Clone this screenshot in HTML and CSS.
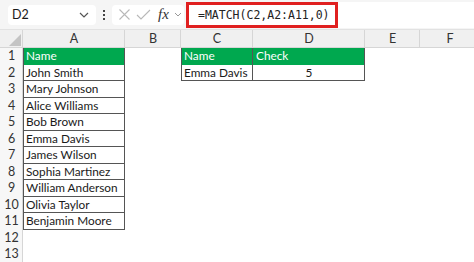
FILE: index.html
```html
<!DOCTYPE html>
<html>
<head>
    <title>MATCH example</title>
    <link rel="stylesheet" href="styles.css">
</head>
<body>
    <!-- Formula bar -->
    <div class="formula-bar">
        <div class="name-box">
            <span>D2</span>
            <svg width="10" height="6" viewBox="0 0 10 6"><path d="M1 1 L5 5 L9 1" fill="none" stroke="#555" stroke-width="1.2"/></svg>
        </div>
        <div class="dots"><i></i><i></i><i></i></div>
        <div class="fx-box">
            <svg width="13" height="13" viewBox="0 0 13 13"><path d="M1.5 1.5 L11.5 11.5 M11.5 1.5 L1.5 11.5" stroke="#b8b8b8" stroke-width="1.1"/></svg>
            <svg width="15" height="13" viewBox="0 0 15 13"><path d="M1 7 L5 11 L14 2" fill="none" stroke="#b8b8b8" stroke-width="1.1"/></svg>
            <span class="fx">fx</span>
            <svg width="8" height="5" viewBox="0 0 8 5"><path d="M1 1 L4 4 L7 1" fill="none" stroke="#999" stroke-width="1"/></svg>
        </div>
        <div class="formula-input">
            <span class="formula">=MATCH(C2,A2:A11,0)</span>
        </div>
    </div>

    <!-- Sheet -->
    <div class="sheet">
        <div class="corner"><svg width="12" height="12" viewBox="0 0 12 12"><path d="M12 0 L12 12 L0 12 Z" fill="#c4c4c4"/></svg></div>
        <div class="col-head">A</div>
        <div class="col-head">B</div>
        <div class="col-head">C</div>
        <div class="col-head">D</div>
        <div class="col-head">E</div>
        <div class="col-head">F</div>

        <div class="row-head">1</div>
        <div class="cell head first">Name</div>
        <div class="cell"></div>
        <div class="cell head first">Name</div>
        <div class="cell head">Check</div>
        <div class="cell"></div>
        <div class="cell"></div>

        <div class="row-head">2</div>
        <div class="cell box first">John Smith</div>
        <div class="cell"></div>
        <div class="cell box first">Emma Davis</div>
        <div class="cell box center">5</div>
        <div class="cell"></div>
        <div class="cell"></div>

        <div class="row-head">3</div>
        <div class="cell box first">Mary Johnson</div>
        <div class="cell wide"></div>

        <div class="row-head">4</div>
        <div class="cell box first">Alice Williams</div>
        <div class="cell wide"></div>

        <div class="row-head">5</div>
        <div class="cell box first">Bob Brown</div>
        <div class="cell wide"></div>

        <div class="row-head">6</div>
        <div class="cell box first">Emma Davis</div>
        <div class="cell wide"></div>

        <div class="row-head">7</div>
        <div class="cell box first">James Wilson</div>
        <div class="cell wide"></div>

        <div class="row-head">8</div>
        <div class="cell box first">Sophia Martinez</div>
        <div class="cell wide"></div>

        <div class="row-head">9</div>
        <div class="cell box first">William Anderson</div>
        <div class="cell wide"></div>

        <div class="row-head">10</div>
        <div class="cell box first">Olivia Taylor</div>
        <div class="cell wide"></div>

        <div class="row-head">11</div>
        <div class="cell box first">Benjamin Moore</div>
        <div class="cell wide"></div>

        <div class="row-head">12</div>
        <div class="cell full"></div>

        <div class="row-head">13</div>
        <div class="cell full"></div>
    </div>
</body>
</html>
```

FILE: styles.css
```css
body {
    margin: 0;
    width: 474px;
    height: 262px;
    overflow: hidden;
    background: #ffffff;
    font-family: Lato, "Liberation Sans", Arial, sans-serif;
    color: #1a1a1a;
}
.formula-bar {
    height: 30px;
    background: #f5f5f5;
    display: flex;
    align-items: center;
    box-sizing: border-box;
    border-bottom: 1px solid #e2e2e2;
}
.name-box {
    margin-left: 8px;
    width: 88px;
    height: 20px;
    background: #fff;
    border-radius: 4px;
    display: flex;
    align-items: center;
    justify-content: space-between;
    box-sizing: border-box;
    padding: 0 7px 0 4px;
    font-size: 12.5px;
}
.dots {
    width: 16px;
    display: flex;
    flex-direction: column;
    align-items: center;
    gap: 2px;
}
.dots i {
    width: 2px;
    height: 2px;
    background: #444;
    display: block;
}
.fx-box {
    width: 72px;
    height: 20px;
    background: #fff;
    border-radius: 4px;
    display: flex;
    align-items: center;
    gap: 5px;
    padding-left: 6px;
    box-sizing: border-box;
}
.fx {
    font-family: "Liberation Serif", "Times New Roman", serif;
    font-style: italic;
    font-size: 15px;
    color: #333;
    margin-left: 2px;
}
.formula-input {
    flex: 1;
    height: 26px;
    margin-left: 2px;
    background: #fff;
    display: flex;
    align-items: center;
}
.formula {
    height: 26px;
    box-sizing: border-box;
    border: 3px solid #e02020;
    display: flex;
    align-items: center;
    padding: 0 5px 0 9px;
    font-family: "DejaVu Sans Mono", "Liberation Mono", monospace;
    font-size: 11.5px;
    color: #222;
}
.sheet {
    display: grid;
    grid-template-columns: 23px 102px 56px 72px 112px 55px 60px;
    grid-template-rows: 18px repeat(13, 16.5px);
}
.corner {
    background: #f0f0f0;
    display: flex;
    align-items: flex-end;
    justify-content: flex-end;
    padding: 0 2px 2px 0;
    box-shadow: inset -1px -1px 0 #d6d6d6;
}
.col-head {
    background: #f0f0f0;
    font-size: 12.5px;
    text-align: center;
    line-height: 18px;
    color: #333;
    box-shadow: inset -1px -1px 0 #d6d6d6;
}
.row-head {
    background: #f7f7f7;
    font-size: 12.5px;
    text-align: center;
    line-height: 16.5px;
    color: #333;
    box-shadow: inset -1px 0 0 #d6d6d6;
}
.cell {
    font-size: 11.8px;
    line-height: 16.5px;
    padding-left: 3px;
    white-space: nowrap;
}
.cell.head {
    background: #00a84f;
    color: #fff;
    box-shadow: inset -1px 0 0 #555;
}
.cell.box {
    box-shadow: inset -1px -1px 0 #555;
}
.cell.first.box {
    box-shadow: inset 1px 0 0 #555, inset -1px -1px 0 #555;
}
.cell.first.head {
    box-shadow: inset 1px 0 0 #555, inset -1px 0 0 #555;
}
.cell.center {
    text-align: center;
    padding-left: 0;
}
.wide {
    grid-column: span 5;
}
.full {
    grid-column: span 6;
}
```
